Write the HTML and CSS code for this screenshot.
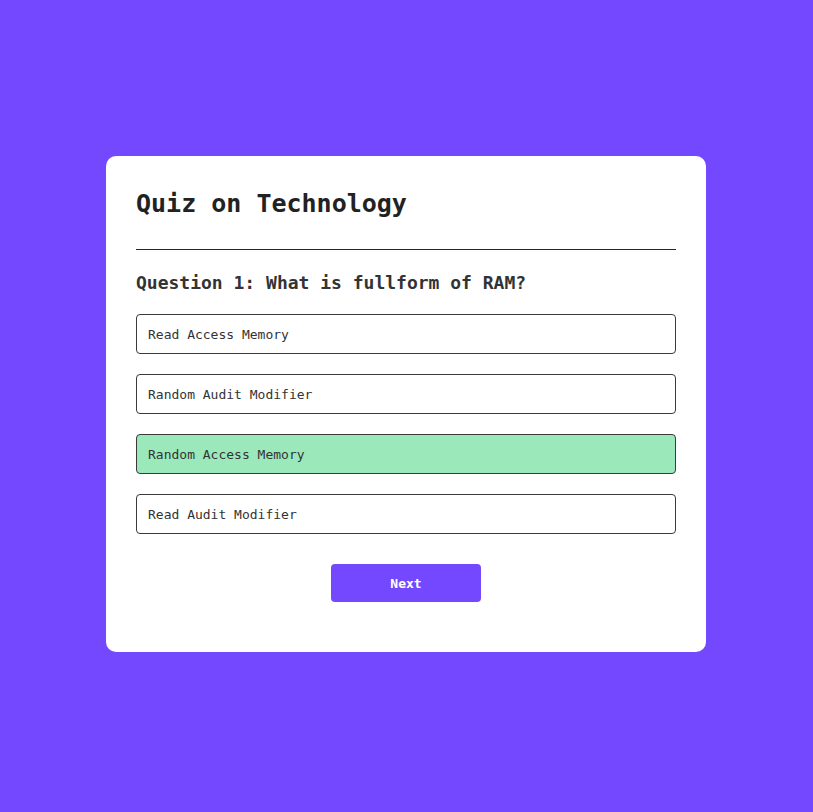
FILE: index.html
```html
<!DOCTYPE html>
<html lang="en">
<head>
<meta charset="utf-8">
<title>Quiz on Technology</title>
<link rel="stylesheet" href="styles.css">
</head>
<body>
  <main class="quiz">
    <h1 class="quiz-title">Quiz on Technology</h1>
    <hr class="quiz-rule">
    <h2 class="quiz-question">Question 1: What is fullform of RAM?</h2>
    <ul class="options">
      <li class="option">Read Access Memory</li>
      <li class="option">Random Audit Modifier</li>
      <li class="option option-correct">Random Access Memory</li>
      <li class="option">Read Audit Modifier</li>
    </ul>
    <div class="actions">
      <button class="next-btn" type="button">Next</button>
    </div>
  </main>
</body>
</html>
```
FILE: styles.css
```css
* { box-sizing: border-box; }

html, body {
  margin: 0;
  padding: 0;
}

body {
  background: #7348ff;
  font-family: "DejaVu Sans Mono", "Liberation Mono", monospace;
  color: #222;
  min-height: 812px;
  padding: 156px 1px 0 0;
}

.quiz {
  width: 600px;
  margin: 0 auto;
  background: #ffffff;
  border-radius: 10px;
  padding: 30px 30px 30px;
}

.quiz-title {
  margin: 0 0 27px;
  font-size: 25px;
  line-height: 36px;
  font-weight: 700;
  color: #222;
}

.quiz-rule {
  margin: 0;
  border: 0;
  height: 1px;
  background: #2c0f8c;
}

.quiz-question {
  margin: 22px 0 20px;
  font-size: 18px;
  line-height: 22px;
  font-weight: 700;
  color: #333;
}

.options {
  list-style: none;
  margin: 0;
  padding: 0;
  display: flex;
  flex-direction: column;
  gap: 20px;
}

.option {
  height: 40px;
  display: flex;
  align-items: center;
  padding: 0 11px;
  border: 1px solid #3a3a3a;
  border-radius: 4px;
  font-size: 13px;
  color: #333;
  background: #fff;
}

.option-correct {
  background: #9be9bb;
}

.actions {
  display: flex;
  justify-content: center;
  margin-top: 30px;
  padding-bottom: 20px;
}

.next-btn {
  width: 150px;
  height: 38px;
  border: 0;
  border-radius: 4px;
  background: #7348ff;
  color: #fff;
  font-family: "DejaVu Sans Mono", "Liberation Mono", monospace;
  font-size: 13px;
  font-weight: 700;
}
```
